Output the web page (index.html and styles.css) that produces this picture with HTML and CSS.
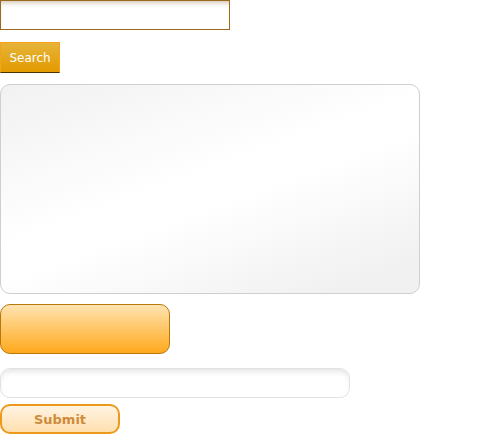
FILE: index.html
```html
<!DOCTYPE html>
<html>
<head>
<meta charset="utf-8">
<link rel="stylesheet" href="styles.css">
</head>
<body>
<div class="page">
  <input class="search-input" type="text">
  <button class="search-btn">Search</button>
  <textarea class="box"></textarea>
  <button class="orange-btn"></button>
  <input class="round-input" type="text">
  <button class="submit-btn">Submit</button>
</div>
</body>
</html>
```
FILE: styles.css
```css
html, body { margin: 0; padding: 0; background: #fff; }
.page {
  display: flex;
  flex-direction: column;
  align-items: flex-start;
  font-family: "DejaVu Sans", Verdana, sans-serif;
}
input, button, textarea { box-sizing: border-box; margin: 0; font-family: inherit; outline: none; }
.search-input {
  width: 230px; height: 30px;
  border: 1px solid #9a6a1e;
  background: #fff;
  box-shadow: inset 0 5px 5px -3px #d2c6b4;
}
.search-btn {
  margin-top: 12px;
  width: 60px; height: 31px;
  border: 1px solid #f5a21a;
  border-bottom: 1px solid #4a3205;
  background: linear-gradient(#e6b43a, #e39a00);
  color: #fff;
  font-size: 12px;
  padding: 0;
}
.box {
  margin-top: 11px;
  width: 420px; height: 210px;
  border: 1px solid #cfcfcf;
  border-radius: 10px;
  background: linear-gradient(160deg, #f1f1f1 0%, #ffffff 45%, #ffffff 55%, #f1f1f1 90%);
  resize: none;
}
.orange-btn {
  margin-top: 10px;
  width: 170px; height: 50px;
  border: 1px solid #b9780a;
  border-radius: 10px;
  background: linear-gradient(#ffe3b0, #ffa91c);
}
.round-input {
  margin-top: 14px;
  width: 350px; height: 30px;
  border: 1px solid #e2e2e2;
  border-radius: 10px;
  background: #fff;
  box-shadow: inset 0 5px 6px -3px #e0e0e0;
}
.submit-btn {
  margin-top: 6px;
  width: 120px; height: 30px;
  border: 2px solid #eb9a1e;
  border-radius: 10px;
  background: linear-gradient(#fff4e2, #ffdfae);
  color: #cf8b3c;
  font-weight: bold;
  font-size: 13px;
  padding: 0;
}
```
